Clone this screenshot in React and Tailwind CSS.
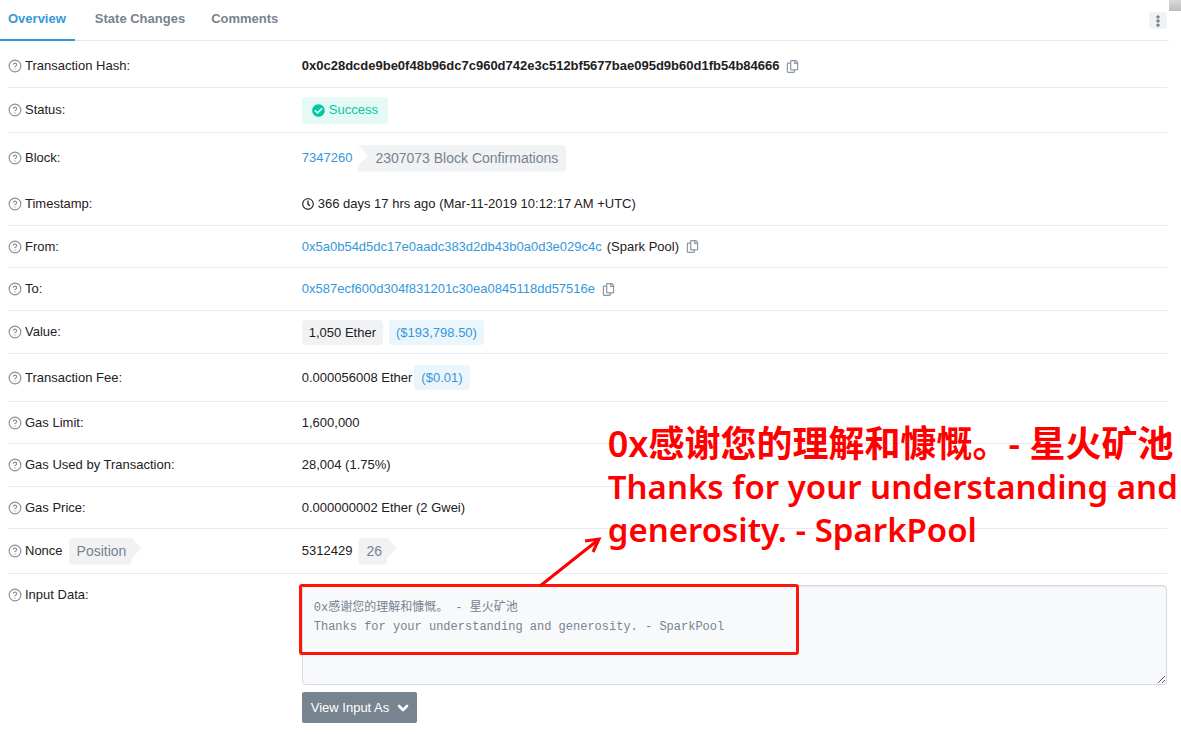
import React from "react";
import { FaRegCopy, FaRegClock, FaCheckCircle, FaEllipsisV } from "react-icons/fa";
import { ChevronDown, CircleHelp } from "lucide-react";

const tabs = ["Overview", "State Changes", "Comments"];

const message = `0x感谢您的理解和慷慨。 - 星火矿池
Thanks for your understanding and generosity. - SparkPool`;

const HelpIcon = () => <CircleHelp className="mr-[3px] size-[14px] shrink-0 text-[#8c8f9c]" />;

const Row = ({ label, badge, size = "min-h-[43px]", last, children }) => (
  <div className={`flex items-center gap-1 ${size} ${last ? "" : "border-b border-[#e7eaf3]"}`}>
    <dt className="flex w-1/4 shrink-0 items-center">
      <HelpIcon />
      {label}
      {badge}
    </dt>
    <dd className="flex min-w-0 items-center">{children}</dd>
  </div>
);

const CopyButton = ({ label }) => (
  <button type="button" aria-label={label} className="ml-[7px] text-[#8c98a4]">
    <FaRegCopy className="size-[13px]" />
  </button>
);

const ArrowBadge = ({ children }) => (
  <span className="ml-[6px] h-[27px] rounded-l bg-[#f1f2f4] pr-[15px] pl-2 text-[14px] leading-[27px] text-[#77838f] [clip-path:polygon(0_0,calc(100%-10px)_0,100%_11px,calc(100%-10px)_21px,calc(100%-10px)_100%,0_100%)]">
    {children}
  </span>
);

const DollarBadge = ({ children }) => (
  <span className="h-[25px] rounded bg-[#ebf5fc] px-[7px] leading-[25px] text-[#3498db]">{children}</span>
);

const AddressLink = ({ children }) => (
  <a href="#address" className="text-[#3498db]">
    {children}
  </a>
);

const Annotation = () => (
  <div className="pointer-events-none">
    <div className="absolute -top-px -left-[3px] h-[71px] w-[500px] rounded-[3px] border-3 border-[#ff1408]" />
    <svg className="absolute -top-[49px] left-[236px] h-[52px] w-[66px]" viewBox="0 0 66 52" fill="none" stroke="#ff0000">
      <path d="M2 50 L60 4" strokeWidth="3" />
      <path d="M47 5 L61 3 L55 16" strokeWidth="3" />
    </svg>
    <div className="absolute -top-[163px] left-[306px] font-['Noto_Sans','Noto_Sans_CJK_SC',sans-serif] font-semibold whitespace-nowrap text-[#ff0000]">
      <p className="text-[36px] leading-[43px]">0x感谢您的理解和慷慨。- 星火矿池</p>
      <p className="text-[33px] leading-[43px]">
        Thanks for your understanding and
        <br />
        generosity. - SparkPool
      </p>
    </div>
  </div>
);

const App = () => {
  return (
    <div className="flex overflow-hidden bg-white font-['Liberation_Sans',Arial,sans-serif] text-[13px] leading-5 text-[#1e2022]">
      <main className="min-w-0 flex-1">
        <header className="flex h-[41px] items-start justify-between border-b border-[#e7eaf3]">
          <nav className="flex">
            {tabs.map((tab, i) => (
              <a
                key={tab}
                href="#tab"
                className={`h-[41px] border-b-2 pt-[9px] font-bold ${
                  i === 0
                    ? "mr-5 border-[#3498db] pr-[9px] pl-2 text-[#3498db]"
                    : "mr-[26px] border-transparent text-[#77838f]"
                }`}
              >
                {tab}
              </a>
            ))}
          </nav>
          <button
            type="button"
            aria-label="More options"
            className="mt-3 mr-[2px] flex h-[17px] w-[18px] items-center justify-center rounded-[3px] bg-[#f1f2f4] text-[#77838f]"
          >
            <FaEllipsisV className="size-3" />
          </button>
        </header>

        <dl className="pr-[2px] pl-2">
          <Row label="Transaction Hash:" size="min-h-[47px] pt-1">
            <span className="font-bold">0x0c28dcde9be0f48b96dc7c960d742e3c512bf5677bae095d9b60d1fb54b84666</span>
            <CopyButton label="Copy transaction hash" />
          </Row>
          <Row label="Status:" size="min-h-[45px]">
            <span className="flex h-[27px] items-center gap-1 rounded bg-[#e5f9f5] px-[10px] text-[#00c9a7]">
              <FaCheckCircle className="size-[13px]" />
              Success
            </span>
          </Row>
          <Row label="Block:" size="min-h-[50px]" last>
            <AddressLink>7347260</AddressLink>
            <span className="ml-[5px] h-[27px] rounded-r bg-[#f1f2f4] pr-2 pl-[18px] text-[14px] leading-[27px] text-[#77838f] [clip-path:polygon(0_0,100%_0,100%_100%,0_100%,0_22px,11px_11px)]">
              2307073 Block Confirmations
            </span>
          </Row>
          <Row label="Timestamp:">
            <FaRegClock className="mr-1 size-3" />
            366 days 17 hrs ago (Mar-11-2019 10:12:17 AM +UTC)
          </Row>
          <Row label="From:" size="min-h-[42px]">
            <AddressLink>0x5a0b54d5dc17e0aadc383d2db43b0a0d3e029c4c</AddressLink>
            <span className="ml-[5px]">(Spark Pool)</span>
            <CopyButton label="Copy sender address" />
          </Row>
          <Row label="To:">
            <AddressLink>0x587ecf600d304f831201c30ea0845118dd57516e</AddressLink>
            <CopyButton label="Copy receiver address" />
          </Row>
          <Row label="Value:">
            <span className="mr-[6px] h-[25px] rounded bg-[#f1f2f4] px-[7px] leading-[25px]">1,050 Ether</span>
            <DollarBadge>($193,798.50)</DollarBadge>
          </Row>
          <Row label="Transaction Fee:" size="min-h-[48px]">
            <span className="mr-[2px]">0.000056008 Ether</span>
            <DollarBadge>($0.01)</DollarBadge>
          </Row>
          <Row label="Gas Limit:" size="min-h-[42px]">
            1,600,000
          </Row>
          <Row label="Gas Used by Transaction:">28,004 (1.75%)</Row>
          <Row label="Gas Price:" size="min-h-[42px]">
            0.000000002 Ether (2 Gwei)
          </Row>
          <Row label="Nonce" badge={<ArrowBadge>Position</ArrowBadge>} size="min-h-[45px]">
            5312429
            <ArrowBadge>26</ArrowBadge>
          </Row>

          {/* Input data */}
          <div className="flex gap-1 pt-[11px]">
            <dt className="flex w-1/4 shrink-0 items-center self-start">
              <HelpIcon />
              <label htmlFor="input-data">Input Data:</label>
            </dt>
            <dd className="relative min-w-0 flex-1">
              <textarea
                id="input-data"
                readOnly
                defaultValue={message}
                className="block h-[100px] w-full resize rounded border border-[#d5dae2] bg-[#f8f9fb] px-[11px] py-[13px] font-['Liberation_Mono','Noto_Sans_CJK_SC',monospace] text-[12px] leading-[19px] text-[#77838f] shadow-[inset_0_1px_0_#e7eaf3]"
              />
              <button
                type="button"
                className="mt-[7px] flex h-[31px] items-center gap-[6px] rounded-[2px] bg-[#77838f] pr-[6px] pl-[9px] text-white"
              >
                View Input As
                <ChevronDown className="size-4" strokeWidth={4} />
              </button>
              <Annotation />
            </dd>
          </div>
        </dl>
      </main>

      {/* Edge of the scroll track */}
      <div className="w-3 shrink-0">
        <div className="h-[11px] bg-linear-to-b from-[#d9d9d9] to-[#bdbdbd]" />
      </div>
    </div>
  );
};

export default App;
